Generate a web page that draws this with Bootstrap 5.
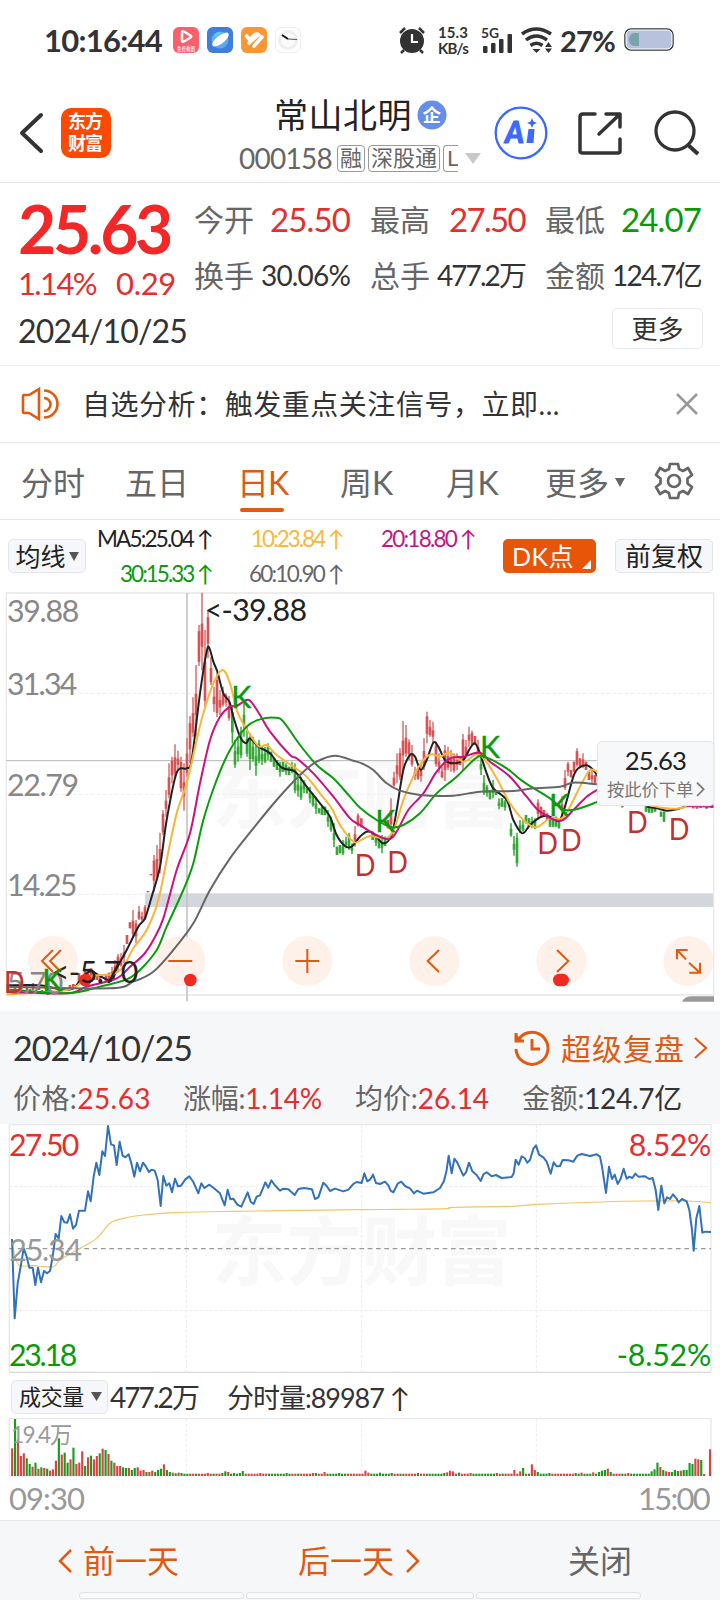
<!DOCTYPE html>
<html lang="zh-CN">
<head>
<meta charset="utf-8">
<meta name="viewport" content="width=device-width, initial-scale=1">
<title>常山北明 000158</title>
<link rel="stylesheet" href="https://cdn.jsdelivr.net/npm/bootstrap@5.3.0/dist/css/bootstrap.min.css">
<style>
:root{--ink:#333;--dim:#666;--up:#e52e2e;--down:#099a0c;--brand:#e05a12}
body{width:720px;height:1600px;overflow:hidden;background:#fff;color:var(--ink);font-family:Lato,"Noto Sans CJK SC",sans-serif;line-height:1;font-weight:400}
svg{display:block;flex:none;overflow:visible}
svg text{font-family:Lato,"Noto Sans CJK SC",sans-serif}
[data-w]{white-space:nowrap;display:inline-block}
.up{color:var(--up)}.down{color:var(--down)}.dim{color:var(--dim)}.brand{color:var(--brand)}
.rule{border-bottom:1px solid #e6e7e9}
.statusbar{height:80px;padding:0 0 0 44px}
.clock{font-size:31px;font-weight:700;width:129px}
.net{font-size:15px;font-weight:700;line-height:16px;text-align:center}
.topbar{height:103px}
.stock{width:246px;padding-top:16px}
.stock-name{font-size:34px;line-height:38px;color:#222}
.stock-code{font-size:28px;width:98px}
.tagbox{border:1px solid #999;border-radius:4px;font-size:22px;height:27px;line-height:24px;padding:0 2px;margin-right:3px;color:#666;flex:none}
.tag-cut{border-right:0;border-radius:4px 0 0 4px;width:15px;overflow:hidden;padding-left:3px;margin-right:0}
.quote{height:183px;border-bottom:1px solid #f0f0f0;display:grid;grid-template-columns:176px 63px 93px 20px 63px 92px 20px 63px 93px;grid-template-rows:62px 50px 54px;padding:5px 0 0 18px;align-items:center}
.quote .lab{font-size:30px;color:#666}
.price{font-size:66px;font-weight:700;color:#f22828;padding-top:20px}
.v1{font-size:33px}.v2{font-size:28px}
.more{width:91px;height:41px;border:1px solid #e9eaec;border-radius:5px;font-size:26px;margin:3px -2px 0 0}
.notice{height:77px}
.notice-text{font-size:28px}
.tabs{height:77px;display:grid;grid-template-columns:104px 112px 103px 106px 99px 109px 1fr;padding-left:21px;font-size:32px;color:#666;align-items:center}
.tabs>span{padding-top:3px}
.tab-on{color:var(--brand);position:relative}
.tab-on::after{content:"";position:absolute;left:3px;width:44px;height:4px;border-radius:2px;background:var(--brand);bottom:-13px}
.mabar{height:70px;padding:2px 0 0 8px}
.pill{border:1px solid #e4e6ea;border-radius:5px;background:#f6f7fa;height:34px}
.ma-grid{display:grid;grid-template-columns:126px 131px 132px;grid-template-rows:35px 35px;justify-items:end;align-items:center;font-size:22.5px;padding-top:2px}
.dk{background:#e85508;color:#fff;border-radius:5px;width:93px;height:34px;font-size:25px;margin-left:28px;padding-left:9px}
.panelhead{background:#f6f7f9;height:110px;padding:14px 0 0 13px}
.shade{height:4px;background:linear-gradient(#fdfdfd,#f4f4f4)}
.stats{display:grid;grid-template-columns:170px 172px 167px 1fr;font-size:28px;height:56px;align-items:center;justify-items:start}
.volrow{height:43px;padding:3px 0 0 11px}
.times{height:43px;font-size:31px;color:#999;padding:0 11px 0 9px}
.footbar{height:80px;background:#f6f7f9;border-top:1px solid #e6e8ea;font-size:32px;display:grid;grid-template-columns:240px 270px 1fr;grid-template-rows:71px 8px;padding-left:58px;align-items:center}
.step{padding-top:9px}
.dock{grid-column:1/4;display:flex;gap:2px;margin-left:21px;height:8px;align-self:start}
.dock i{border:1px solid #dfe1e5;background:#f9fafb;height:7px;border-radius:3px}
</style>
</head>
<body>
<header>
<div class="statusbar d-flex align-items-center">
  <span class="clock"><span data-w="118">10:16:44</span></span>
  <svg width="130" height="26" viewBox="0 0 130 26">
    <rect width="26" height="26" rx="6" fill="#f8606b"/><path d="M9 5.500v8q0 2 2 1l6.500-4q1.500-1 0-2l-6.500-4q-2-1-2 1z" fill="none" stroke="#fff" stroke-width="2.500"/><text x="4" y="24" font-size="6.200" fill="#fff" textLength="18" lengthAdjust="spacingAndGlyphs">免费看剧</text>
    <rect x="34" width="26" height="26" rx="6" fill="#3f7edc"/><circle cx="47" cy="13" r="8.500" fill="#5ea9f5"/><path d="M40 11a8 8 0 0 1 9-6z" fill="#5bd2f6"/><ellipse cx="47.500" cy="12.500" rx="10" ry="4" transform="rotate(-38 47.500 12.500)" fill="#fff"/>
    <rect x="68" width="26" height="26" rx="6" fill="#fc9533"/><path d="M73.500 9l3 3.500 5-4.500q3-2 4.500 0M76 16l9-8M81 19l8-9" stroke="#fff" stroke-width="3.600" fill="none" stroke-linecap="round" stroke-linejoin="round"/>
    <rect x="102.500" y=".5" width="25" height="25" rx="6" fill="#fff" stroke="#eee"/><circle cx="115" cy="13" r="10" fill="#eee"/><circle cx="115" cy="13" r="7" fill="#fafafa"/><path d="M109 8l6 4" stroke="#111" stroke-width="2"/><path d="M115 12l9 .5" stroke="#555"/>
  </svg>
  <svg width="28" height="28" viewBox="0 0 28 28" style="margin-left:95px"><circle cx="14" cy="15" r="12" fill="#333"/><path d="M2 7l5-5M26 7l-5-5M6 24l-3 3M22 24l3 3" stroke="#333" stroke-width="2.500"/><path d="M14 8v8h6" fill="none" stroke="#fff" stroke-width="2.200"/></svg>
  <div class="net" style="margin-left:12px"><div data-w="30">15.3</div><br><div data-w="30">KB/s</div></div>
  <svg style="margin-left:13px" width="32" height="28" viewBox="0 0 32 28"><text x="0" y="12" font-size="14" font-weight="700" fill="#333" textLength="18" lengthAdjust="spacingAndGlyphs">5G</text><g fill="#333"><rect x="2" y="20" width="4.500" height="7" rx="1"/><rect x="10" y="17" width="4.500" height="10" rx="1"/><rect x="18" y="13" width="4.500" height="14" rx="1"/><rect x="26.500" y="8" width="4.500" height="19" rx="1"/></g></svg>
  <svg style="margin-left:7px" width="34" height="28" viewBox="0 0 34 28"><g fill="none" stroke="#333" stroke-width="3.500"><path d="M2 8q14-10 29 0M6 14q10-8 21 0M10.500 19.500q6-4.500 12 0"/></g><path d="M12.500 23h8l-4 4z" fill="#333"/><path d="M25 21l3.500-5 3.500 5zM25 22.500l3.500 4.500 3.500-4.500z" fill="#333"/></svg>
  <span class="fw-bold" style="margin-left:6px;width:64px;font-size:29px"><span data-w="55">27%</span></span>
  <svg width="50" height="24" viewBox="0 0 50 24"><rect x="1" y="1" width="48" height="21" rx="6" fill="#b8c2dd" stroke="#333" stroke-width="1.500"/><rect x="2" y="2" width="46" height="19" rx="5" fill="none" stroke="#fff"/><path d="M15 5v13H10q-5-1-5-6.500t5-6.500z" fill="#77a4ad"/></svg>
</div>
<div class="topbar rule d-flex">
  <svg width="112" height="102" viewBox="0 80 112 102"><path d="M41 115L22 133l19 18" fill="none" stroke="#333" stroke-width="4" stroke-linecap="round" stroke-linejoin="round"/><rect x="61" y="108" width="50" height="50" rx="10" fill="#fc4a04"/><g fill="#fff" font-size="18" font-weight="700"><text x="68" y="128" textLength="35">东方</text><text x="68" y="150" textLength="35">财富</text></g></svg>
  <div class="stock" style="margin-left:127px">
    <div class="stock-name d-flex align-items-center" style="padding-left:35px"><span data-w="138">常山北明</span><svg class="ms-1" width="30" height="30" viewBox="0 0 30 30"><circle cx="16" cy="15" r="14.500" fill="#658ee8"/><text x="6.500" y="22" font-size="18.500" font-weight="700" fill="#fff">企</text></svg></div>
    <div class="d-flex align-items-center dim" style="margin-top:10px"><span class="stock-code"><span data-w="93">000158</span></span><span class="tagbox">融</span><span class="tagbox">深股通</span><span class="tagbox tag-cut">L</span><svg class="ms-1" width="20" height="12"><path d="M3 1h16l-8 11z" fill="#c8c8c8"/></svg></div>
  </div>
  <svg width="235" height="102" viewBox="485 80 235 102" fill="none"><circle cx="521" cy="133" r="25.300" stroke="#3c69fb" stroke-width="2.300"/><text x="505" y="143" font-size="30" font-weight="900" font-style="italic" fill="#3c69fb" stroke="#3c69fb" stroke-linejoin="round" textLength="19" lengthAdjust="spacingAndGlyphs">A</text><path d="M528.500 129h6l-1 14h-7zM532 118l1.500 3.500 3.500 1.500-3.500 1.500-1.500 3.500-1.500-3.500-3.500-1.500 3.500-1.500z" fill="#3c69fb"/><g stroke="#333" stroke-width="3.500" stroke-linecap="round" stroke-linejoin="round"><path d="M595 114h-12q-3 0-3 3v34q0 2 3 2h35q2 0 2-2v-12M606 114h14v13M599 134l20-19"/></g><circle cx="675" cy="131" r="19" stroke="#333" stroke-width="3.300"/><path d="M687 144l11 10" stroke="#333" stroke-width="4"/></svg>
</div>
</header>
<main>
<section class="quote">
  <div class="price"><span data-w="152">25.63</span></div><div class="lab">今开</div><div class="text-end v1 up"><span data-w="80">25.50</span></div><i></i><div class="lab">最高</div><div class="text-end v1 up"><span data-w="76">27.50</span></div><i></i><div class="lab">最低</div><div class="text-end v1 down"><span data-w="80">24.07</span></div>
  <div class="up d-flex" style="font-size:31px;padding-top:16px"><span data-w="78">1.14%</span><span data-w="60" style="margin-left:20px">0.29</span></div><div class="lab">换手</div><div class="text-end v2"><span data-w="89">30.06%</span></div><i></i><div class="lab">总手</div><div class="text-end v2"><span data-w="88">477.2万</span></div><i></i><div class="lab">金额</div><div class="text-end v2"><span data-w="89">124.7亿</span></div>
  <div style="font-size:32px;padding-top:8px"><span data-w="169">2024/10/25</span></div><div class="d-flex justify-content-end" style="grid-column:2/10"><div class="more d-flex align-items-center justify-content-center">更多</div></div>
</section>
<section class="notice rule d-flex align-items-center">
  <svg class="ms-3" width="66" height="34" viewBox="16 387 66 34" fill="none" stroke="#e05a12" stroke-width="2.600"><path d="M39 389v30l-10-6h-5q-1 0-1-2v-14q0-2 1-2h5zM44 390.500a13.500 13.500 0 0 1 0 27M44 398a6.500 6.500 0 0 1 0 13"/></svg>
  <span class="notice-text" data-w="478">自选分析：触发重点关注信号，立即...</span>
  <svg style="margin-left:115px" width="24" height="24" stroke="#999" stroke-width="2.500"><path d="M2 2l20 20M22 2L2 22"/></svg>
</section>
<nav class="tabs rule">
  <span>分时</span><span>五日</span><span class="tab-on"><span data-w="51">日K</span></span><span><span data-w="53">周K</span></span><span><span data-w="52">月K</span></span>
  <span class="d-flex align-items-center">更多<svg style="margin-left:5px" width="14" height="10"><path d="M1 0h10l-5 9z" fill="#666"/></svg></span>
  <svg width="40" height="40" viewBox="-20 -20 40 40" fill="none" stroke="#666" stroke-width="2.700" stroke-linejoin="round"><path d="M-4-17H4L5-12 9-10 14-13 18-6 13.500-2.500V2.500L18 6 14 13 9 10 5 12 4 17H-4L-5 12-9 10-14 13-18 6-13.500 2.500V-2.500L-18-6-14-13-9-10-5-12z"/><circle r="6"/></svg>
</nav>
<section class="mabar d-flex align-items-center">
  <div class="pill d-flex align-items-center justify-content-center" style="width:78px;font-size:25px;color:#222"><span data-w="50">均线</span><svg style="margin-left:3px" width="10" height="9"><path d="M0 0h10L5 9z" fill="#555"/></svg></div>
  <div class="ma-grid"><span data-w="115" style="color:#222">MA5:25.04 ↑</span><span data-w="92" style="color:#f8b83e">10:23.84 ↑</span><span data-w="94" style="color:#c51584">20:18.80 ↑</span><span data-w="92" class="down">30:15.33 ↑</span><span data-w="94" class="dim">60:10.90 ↑</span></div>
  <div class="dk d-flex align-items-center"><span data-w="62">DK点</span><svg style="margin:16px 0 0 8px" width="9" height="9"><path d="M9 0v9H0z" fill="#fff"/></svg></div>
  <div class="pill d-flex align-items-center justify-content-center" style="width:98px;font-size:26px;margin-left:19px;color:#222">前复权</div>
</section>
<!-- Daily candles: three drawing units per pixel -->
<svg id="daily" width="720" height="420" viewBox="0 0 2160 1260" fill="none">
  <text x="635" y="697" font-size="226" font-weight="700" fill="#f8f8f8" textLength="900">东方财富</text>
  <path d="M20 310H2140M20 613H2140M20 913H2140" stroke="#ededed" stroke-width="3" stroke-dasharray="12 6"/>
  <rect x="435" y="910" width="1705" height="41" fill="#d3d7dd"/>
  <path d="M19 9H2141V1215H19z" stroke="#e8e8e8" stroke-width="4"/>
  <path d="M19 512H2140" stroke="#b5b5b5" stroke-width="3"/><path d="M561 9V1234" stroke="#c4c4c4" stroke-width="5"/>
  <g id="buttons" fill="#fef1ea"></g>
  <g stroke="#e05a12" stroke-width="6"><path d="M159 1080l-33 33 33 33M183 1080l-33 33 33 33M505 1113h72M886 1113h72M922 1077v72M1317 1080l-34 33 34 33M1671 1080l34 33-34 33M2058 1108l-27-28M2031 1108v-28h32M2067 1118l33 30M2100 1118v30h-32"/></g>
  <g fill="#888" font-size="91"><text x="21" y="96" textLength="217">39.88</text><text x="21" y="314" textLength="211">31.34</text><text x="21" y="618" textLength="216">22.79</text><text x="21" y="918" textLength="211">14.25</text></g>
  <g id="candles"></g><g id="averages" stroke-width="6"></g>
  <text x="20" y="1213" font-size="91" fill="#888" textLength="170">5.70</text>
  <g fill="#ef2a22"><circle cx="256" cy="1170" r="19"/><circle cx="571" cy="1170" r="19"/><rect x="1659" y="1151" width="48" height="38" rx="19"/></g>
  <g fill="#222" font-size="91"><text x="614" y="92" textLength="307">&lt;-39.88</text><text x="155" y="1178" textLength="260">&lt;-5.70</text></g>
  <g font-size="91" fill="#c2302f" id="dmarks"></g><g font-size="91" fill="#099a0c" stroke="#099a0c" stroke-width="1" id="kmarks"></g>
  <rect x="1792" y="455" width="350" height="192" rx="14" fill="#f7f8fa" stroke="#e1e4e8" stroke-width="3"/>
  <text x="1874" y="540" font-size="77" fill="#222" textLength="187">25.63</text><text x="1821" y="619" font-size="52" fill="#777" textLength="259">按此价下单</text><path d="M2091 578l20 20-20 20" stroke="#777" stroke-width="5"/>
  <path d="M2046 1235q8-16 30-16h66v16z" fill="#999"/>
</svg>
<div class="shade"></div>
<section class="panelhead">
  <div class="d-flex align-items-center" style="height:44px;margin-top:-2px"><span style="font-size:34px;width:500px"><span data-w="179">2024/10/25</span></span>
    <svg width="38" height="38" viewBox="0 0 38 38" fill="none" stroke="#e05a12" stroke-width="3"><path d="M3 20a16 16 0 1 0 3-10M3 4v8h8M19 10v10h8"/><path d="M2 4v9h9z" fill="#e05a12" stroke="none"/></svg>
    <span class="brand" style="font-size:30px;margin-left:10px" data-w="124">超级复盘</span><svg style="margin-left:9px" width="14" height="24" fill="none" stroke="#e05a12" stroke-width="2.200"><path d="M1 2l11 10L1 22"/></svg></div>
  <div class="stats"><div data-w="138"><span class="dim">价格:</span><span class="up">25.63</span></div><div data-w="139"><span class="dim">涨幅:</span><span class="up">1.14%</span></div><div data-w="134"><span class="dim">均价:</span><span class="up">26.14</span></div><div data-w="160"><span class="dim">金额:</span>124.7亿</div></div>
</section>
<!-- Intraday price and running average -->
<svg id="intraday" width="720" height="250" viewBox="0 372 2160 750" fill="none">
  <text x="635" y="836" font-size="226" font-weight="700" fill="#f8f8f8" textLength="900">东方财富</text>
  <path d="M28 374H2133M28 374V1117M2133 374V1117" stroke="#e8e8e8" stroke-width="4"/><path d="M28 1117H2133" stroke="#d8d8d8" stroke-width="4"/>
  <path d="M28 560H2133M28 932H2133M559 374V1117M1085 374V1117M1609 374V1117" stroke="#ececec" stroke-width="3" stroke-dasharray="10 5"/>
  <path d="M28 746H2133" stroke="#999" stroke-width="3.500" stroke-dasharray="14 11"/>
  <g id="avgline"></g><path id="priceline" stroke="#3472b8" stroke-width="6" stroke-linejoin="round"/>
  <g font-size="91"><text x="27" y="468" fill="#e52e2e" textLength="211">27.50</text><text x="28" y="782" fill="#999" textLength="218">25.34</text><text x="27" y="1098" fill="#099a0c" textLength="205">23.18</text><text x="1886" y="468" fill="#e52e2e" textLength="248">8.52%</text><text x="1850" y="1098" fill="#099a0c" textLength="284">-8.52%</text></g>
</svg>
<section class="volrow d-flex align-items-center">
  <div class="pill d-flex align-items-center" style="width:97px;font-size:22px;padding-left:7px;color:#222"><span data-w="65">成交量</span><svg style="margin-left:7px" width="12" height="10"><path d="M0 0h11L5.500 9z" fill="#555"/></svg></div>
  <span style="font-size:28px;margin-left:2px;width:117px"><span data-w="88">477.2万</span></span><span style="font-size:27px" data-w="182">分时量:89987 ↑</span>
</section>
<svg id="volume" width="720" height="60" viewBox="0 141 2160 180" fill="none">
  <path d="M28 318V146H2133V318" stroke="#e8e8e8" stroke-width="4"/><path d="M559 146V318M1085 146V318M1609 146V318" stroke="#eee" stroke-width="3" stroke-dasharray="10 5"/>
  <g id="bars"></g><text x="33" y="219" font-size="68" fill="#999" textLength="184">19.4万</text>
</svg>
<div class="times d-flex justify-content-between align-items-center"><span data-w="75">09:30</span><span data-w="71">15:00</span></div>
</main>
<footer class="footbar brand">
  <div class="step d-flex align-items-center"><svg width="25" height="26" fill="none" stroke="#e05a12" stroke-width="2.500"><path d="M13 2L2 13l11 11"/></svg><span>前一天</span></div>
  <div class="step d-flex align-items-center"><span>后一天</span><svg width="26" height="26" fill="none" stroke="#e05a12" stroke-width="2.500"><path d="M13 2l11 11-11 11"/></svg></div>
  <div class="step dim">关闭</div>
  <div class="dock"><i style="width:165px"></i><i style="width:228px"></i><i style="width:165px"></i></div>
</footer>
<script src="https://cdn.jsdelivr.net/npm/bootstrap@5.3.0/dist/js/bootstrap.bundle.min.js"></script>
<script>
document.querySelectorAll('[data-w]').forEach(e=>{
  const n=e.textContent.length, gap=(+e.dataset.w-e.getBoundingClientRect().width)/n;
  e.style.letterSpacing=gap+'px';
});
const $=id=>document.getElementById(id);
const pts=s=>s.trim().split(/\s+/).map(p=>p.split(',').map(Number));
// Smooth curve through the given points
function curve(s){
  const p=pts(s);let d='M'+p[0];
  for(let i=0;i<p.length-1;i++){const a=p[i-1]||p[i],b=p[i],c=p[i+1],e=p[i+2]||c,k=.16;
    d+=`C${b[0]+(c[0]-a[0])*k},${b[1]+(c[1]-a[1])*k} ${c[0]-(e[0]-b[0])*k},${c[1]-(e[1]-b[1])*k} ${c}`}
  return d;
}
$('buttons').innerHTML=[159,541,922,1303,1684,2065].map(x=>`<circle cx="${x}" cy="1113" r="75"/>`).join('');
const mark=(x,y,c)=>`<text x="${x}" y="${y}" textLength="${c=='K'?60:62}" lengthAdjust="spacingAndGlyphs">${c}</text>`;
$('dmarks').innerHTML=pts('12,1209 1064,858 1162,848 1612,793 1683,784 1881,728 2006,750').map(p=>mark(...p,'D')).join('');
$('kmarks').innerHTML=pts('694,354 1126,726 1440,504 1647,678 127,1202').map(p=>mark(...p,'K')).join('');
// x, high, low; the first list rises, the second falls
const red=`237,1150,1175 246,1160,1180 255,1140,1170 264,1140,1160 273,1135,1165 282,1150,1170 291,1155,1170 300,1160,1178 318,1155,1175 327,1148,1170
336,1130,1168 345,1110,1155 354,1092,1145 363,1090,1130 372,1065,1120 381,1035,1062 390,997,1015 399,960,1040 408,990,1060 417,948,990 426,965,1000 435,945,990 444,903,907 453,852,856 462,795,905 471,765,870 480,728,850 489,660,735 498,600,680 507,520,625 516,500,580 525,463,560 534,482,542 543,500,605 552,520,662 561,445,560 570,378,520 579,322,440 588,225,440 597,105,228 606,8,240 615,120,355 624,60,205 633,200,285 642,290,365 651,250,382 660,300,375 669,290,350 678,310,350 687,318,392
1065,708,770 1074,670,710 1084,685,712 1173,625,712 1164,690,715 1182,545,590 1191,490,580 1200,475,570 1209,393,540 1218,405,500 1227,448,510 1236,465,530 1245,530,570 1254,530,570 1263,520,575 1272,445,540 1281,365,460 1290,390,440 1299,395,460 1308,455,530 1317,490,550 1326,530,565 1335,465,573 1344,470,540 1353,480,545 1362,490,548 1371,490,540 1380,500,525 1389,432,540 1398,450,500 1407,410,470 1416,422,468 1425,438,465 1434,450,500
1614,628,690 1623,650,680 1632,660,680 1641,670,690 1686,617,680 1695,540,600 1704,515,558 1713,540,562 1722,515,545 1731,475,530 1740,505,530 1749,490,535 1758,515,540 1767,545,570 1776,540,580 1785,555,580 2080,645,655 2091,646,656 2102,645,654 2120,645,656 2136,644,654
45,1192,1202 81,1190,1202 99,1180,1200 117,1190,1200 210,1185,1200 220,1182,1195`;
const green=`697,350,460 705,450,533 714,440,515 723,410,505 732,330,440 741,410,500 750,430,540 759,440,515 768,460,557 777,450,520 786,470,525 795,470,520 804,460,510 813,485,515 822,505,530 831,510,540 840,515,560 849,515,545 858,520,555 867,530,555 876,515,550 885,520,610 894,560,620 903,560,630 912,570,610 921,595,610 930,590,640 939,610,650 948,620,672 957,655,670 966,650,675 975,650,675 984,660,710 993,680,725 1002,700,772 1011,770,795 1020,765,790 1029,750,795 1038,740,775 1047,728,780 1056,760,792
1118,725,750 1128,735,768 1137,745,775 1146,735,790 1155,740,768 1443,500,555 1452,555,615 1461,585,620 1470,600,628 1479,570,625 1488,600,615 1497,625,658 1506,625,650 1515,630,662 1533,700,740 1542,738,797 1551,728,830 1560,690,730 1569,690,725 1578,675,700 1587,685,710 1596,680,715 1605,685,718 1650,680,710 1659,690,710 1668,680,710 1677,690,715 1867,640,652 1938,645,665 1947,650,668 1956,655,668 1965,650,665 1983,665,680 1992,665,695 36,1200,1210 63,1195,1212 90,1198,1212 126,1200,1212 144,1200,1215 162,1205,1213 180,1200,1212`;
const draw=(s,wick,body)=>pts(s).map(([x,a,b],i)=>{const h=b-a,t=h>30?a+h*(i%3?.4:.15):a,z=h>30?b-h*(i%2?.1:.3):b;
  return `<path d="M${x} ${a}V${b}" stroke="${wick}" stroke-width="4.500"/><rect x="${x-4}" y="${t}" width="8" height="${z-t}" fill="${body}"/>`}).join('');
$('candles').innerHTML=draw(red,'#d07070','#d85353')+draw(green,'#35a838','#35a838');
const ma=[
['#222','20,1186 120,1186 180,1198 220,1195 250,1158 275,1144 300,1158 335,1172 350,1135 380,1080 415,1010 435,985 455,920 480,830 500,690 530,548 560,535 575,510 600,310 620,185 628,174 640,215 652,245 670,310 688,335 700,380 720,440 738,460 750,445 775,470 810,490 845,533 885,545 920,590 960,640 990,680 1010,735 1035,768 1055,770 1080,740 1100,725 1120,730 1150,760 1175,735 1190,660 1210,540 1230,495 1245,500 1262,540 1280,510 1300,458 1315,470 1335,510 1360,520 1390,510 1410,475 1425,460 1440,490 1460,550 1480,595 1520,630 1540,690 1567,730 1590,705 1620,682 1640,677 1660,685 1678,692 1695,650 1720,560 1735,535 1760,526 1780,540 1794,560'],
['#222','1940,650 1970,655 2000,662 2030,658 2060,648'],
['#f8b53a','20,1213 200,1200 260,1165 300,1155 340,1152 370,1130 400,1075 440,1020 475,930 500,810 530,670 560,580 590,450 610,370 640,280 668,240 690,280 712,365 735,410 775,468 800,465 830,495 880,530 920,560 960,610 995,655 1020,705 1060,755 1080,752 1110,738 1160,745 1185,710 1210,630 1240,560 1270,510 1295,493 1320,500 1350,488 1390,515 1430,493 1455,510 1490,565 1530,640 1570,690 1608,712 1650,685 1685,685 1710,650 1740,590 1770,540 1794,547'],
['#f8b53a','1950,646 1990,654 2030,656 2080,646'],
['#cb117f','20,1205 200,1210 260,1190 350,1165 390,1130 430,1095 460,1050 490,985 530,840 570,730 600,580 630,450 660,380 690,350 710,348 740,330 755,337 780,375 810,425 870,495 890,505 940,550 1000,620 1050,685 1080,705 1120,730 1165,748 1190,725 1225,660 1270,610 1310,545 1350,505 1390,500 1440,488 1470,515 1530,560 1580,620 1620,665 1680,693 1720,660 1760,620 1794,598'],
['#cb117f','2060,648 2140,650'],
['#0a9c0d','20,1198 200,1210 300,1190 380,1168 420,1140 470,1080 500,1010 550,900 580,820 610,690 650,570 690,480 740,410 780,388 825,383 850,395 900,465 950,525 1000,565 1050,620 1080,653 1130,690 1175,712 1210,705 1260,670 1310,610 1370,560 1430,503 1460,503 1520,535 1570,575 1650,625 1690,658 1730,658 1794,635'],
['#666','20,1190 330,1195 400,1175 460,1145 520,1080 580,1000 630,900 690,805 760,715 830,630 900,555 950,515 1005,497 1060,512 1090,522 1120,540 1160,580 1200,602 1260,615 1360,617 1440,605 1540,603 1600,595 1680,590 1720,578 1794,583']];
$('averages').innerHTML=ma.map(m=>`<path d="${curve(m[1])}" stroke="${m[0]}"/>`).join('');
$('avgline').innerHTML=`<path d="${curve('36,720 45,770 60,797 100,797 160,800 180,780 240,745 290,715 330,670 370,655 430,645 520,638 700,634 900,631 1080,629 1200,628 1340,626 1360,622 1540,619 1610,613 1800,606 1920,603 2060,603 2133,608')}" stroke="#f3c469" stroke-width="3.500"/>`;
$('priceline').setAttribute('d','M'+pts(`36,717 44,955 53,850 62,800 71,745 80,770 88,803 98,803 106,855 114,803 123,847 132,813 141,820 150,813 158,770 167,702 176,715 184,648 193,667 202,668 210,643 219,686 228,675 237,632 255,632 264,574 272,604 281,530 289,488 298,525 307,454 315,468 324,378 333,433 342,436 350,495 359,425 368,467 376,472 386,463 394,490 403,530 411,488 420,514 429,488 438,500 447,516 455,509 464,512 473,540 482,618 490,528 499,557 508,550 516,577 525,536 534,559 543,557 556,538 568,529 580,546 595,580 604,550 613,564 628,554 642,565 660,580 674,616 683,569 691,598 700,596 712,614 724,620 743,577 752,605 761,612 770,590 780,586 796,547 805,563 814,541 824,555 840,572 850,566 865,568 884,585 895,567 912,564 936,568 945,597 955,592 970,548 980,558 990,573 1005,566 1030,574 1045,569 1060,552 1070,546 1085,549
1093,520 1102,544 1111,538 1119,524 1128,549 1140,552 1155,545 1165,556 1172,572 1180,577 1194,550 1204,545 1215,558 1230,565 1242,580 1251,572 1270,581 1300,577 1320,564 1332,543 1340,510 1346,467 1355,520 1363,476 1372,488 1390,527 1398,517 1407,488 1417,514 1430,525 1442,543 1451,522 1460,517 1475,529 1488,525 1505,534 1535,531 1541,520 1547,479 1556,494 1565,469 1574,474 1582,488 1590,480 1600,446 1608,436 1617,464 1630,472 1640,485 1652,521 1661,487 1670,499 1680,498 1688,480 1705,481 1720,485 1732,467 1745,462 1770,468 1790,463 1800,470 1806,500 1818,579 1827,500 1836,537 1844,524 1853,552 1862,536 1871,506 1880,536 1888,530 1897,534 1906,521 1915,530 1935,529 1948,537 1958,534 1967,570 1975,630 1984,557 1993,610 2001,592 2010,597 2019,583 2029,595 2036,607 2046,597 2060,604 2068,630 2076,690 2081,752 2089,655 2098,618 2107,698 2116,695 2133,696`).join('L'));
// Volume: one bar per slot, r = up, g = down
const head='83r 171g 110r 60r 68r 53g 36g 28r 40g 22r 26g 24r 22g 16r 20r 46r 113g 64r 70g 40g 50r 85g 36r 40r 74r 30g 56r 61g 50r 60r 68g 82r 78g 66r 46g 40r 30r 30r 26g 24g 24r 18g 24g 26r 16r 18r 12g 12r 16r 12g 18g 22g 35r 18g 12g 10r 8g 10r'.split(' ');
const vol={};
pts('666,9,1 674,14,1 683,12,0 717,9,1 726,15,1 944,9,1 970,12,0 1093,16,0 1102,10,0 1137,10,1 1338,11,0 1346,16,0 1355,35,1 1363,14,0 1372,10,1 1547,18,0 1556,14,0 1573,24,1 1599,35,0 1608,18,0 1617,12,1 1748,10,0 1783,11,0 1800,12,1 1809,16,1 1817,18,1 1826,22,0 1835,12,1 1958,14,1 1967,20,1 1975,40,1 1984,27,0 1993,18,1 2001,14,0 2010,12,0 2019,12,1 2028,18,1 2037,15,1 2045,16,0 2054,18,1 2063,18,1 2072,39,1 2081,36,1 2089,52,0 2098,50,0 2107,48,1 2115,6,0 2124,0,0 2132,80,0').forEach(([x,h,g])=>vol[Math.round((x-36)/8.76)]=[h,g?'g':'r']);
let out='';
for(let i=0;i<240&&36+i*8.76<2135;i++){
  const [h,c]=head[i]?[parseInt(head[i]),head[i].slice(-1)]:vol[i]||[i%9==4?9:7,'rrgrrggrgg'[(i*3+(i/7|0))%10]];
  out+=`<rect x="${33.2+i*8.76}" y="${318-h}" width="6.400" height="${h}" fill="${c=='r'?'#d84444':'#199c1e'}"/>`;
}
$('bars').innerHTML=out;
</script>
</body>
</html>
